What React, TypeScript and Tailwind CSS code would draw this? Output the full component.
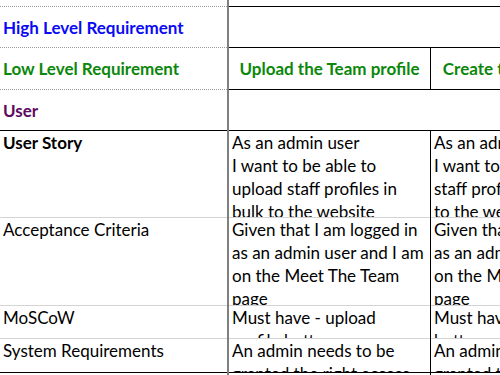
import React from 'react';

type Cell = { text?: string[]; cls?: string; center?: boolean };
type Row = {
    h: string;
    left: Cell;
    mid?: Cell; // if undefined, mid + right are merged
    right?: Cell;
    leftBorder: string;
    rightBorder: string;
    top?: boolean;
};

const dotted = 'border-b border-dotted border-[#9c9c9c]';
const solidBlack = 'border-b border-black';
const grey = 'border-b border-[#d4d4d4]';

const rows: Row[] = [
    { h: 'h-[7px]', left: {}, leftBorder: dotted, rightBorder: solidBlack },
    {
        h: 'h-[41px]',
        left: { text: ['High Level Requirement'], cls: 'font-bold text-[#0a0af5]' },
        leftBorder: dotted,
        rightBorder: solidBlack,
    },
    {
        h: 'h-[42px]',
        left: { text: ['Low Level Requirement'], cls: 'font-bold text-[#0b870b]' },
        mid: { text: ['Upload the Team profile'], cls: 'font-bold text-[#0b870b]', center: true },
        right: { text: ['Create the Team profile page'], cls: 'font-bold text-[#0b870b]', center: true },
        leftBorder: dotted,
        rightBorder: solidBlack,
    },
    {
        h: 'h-[41px]',
        left: { text: ['User'], cls: 'font-bold text-[#5e0a5e]' },
        leftBorder: solidBlack,
        rightBorder: solidBlack,
    },
    {
        h: 'h-[87px]',
        top: true,
        left: { text: ['User Story'], cls: 'font-bold' },
        mid: { text: ['As an admin user', 'I want to be able to', 'upload staff profiles in', 'bulk to the website'] },
        right: { text: ['As an admin user', 'I want to be able to upload', 'staff profiles in bulk', 'to the website'] },
        leftBorder: grey,
        rightBorder: grey,
    },
    {
        h: 'h-[88px]',
        top: true,
        left: { text: ['Acceptance Criteria'] },
        mid: { text: ['Given that I am logged in', 'as an admin user and I am', 'on the Meet The Team', 'page'] },
        right: { text: ['Given that I am logged in', 'as an admin user and I am', 'on the Meet The Team', 'page'] },
        leftBorder: grey,
        rightBorder: grey,
    },
    {
        h: 'h-[33px]',
        top: true,
        left: { text: ['MoSCoW'] },
        mid: { text: ['Must have - upload', 'profile button'] },
        right: { text: ['Must have - create', 'button'] },
        leftBorder: grey,
        rightBorder: grey,
    },
    {
        h: 'h-[34px]',
        top: true,
        left: { text: ['System Requirements'] },
        mid: { text: ['An admin needs to be', 'granted the right access'] },
        right: { text: ['An admin needs to be', 'granted the right access'] },
        leftBorder: solidBlack,
        rightBorder: solidBlack,
    },
];

const CellBody = ({ cell, top }: { cell: Cell; top?: boolean }) => (
    <div className={`h-full flex flex-col ${top ? 'justify-start' : 'justify-center'} ${cell.center ? 'items-center' : 'items-start'} px-[3px] ${cell.cls ?? ''}`}>
        {cell.text?.map((t, i) => (
            <div key={i} className="whitespace-nowrap leading-[23px]">{t}</div>
        ))}
    </div>
);

export default function App() {
    return (
        <div className="w-[500px] h-[375px] overflow-hidden bg-white text-black text-[17px]" style={{ fontFamily: 'Lato, "Liberation Sans", sans-serif' }}>
            {rows.map((r, i) => (
                <div key={i} className={`flex ${r.h}`}>
                    {/* label column, grey divider on its right */}
                    <div className="w-[229px] shrink-0 border-r-2 border-[#7f7f7f]">
                        <div className={`h-full overflow-hidden ${r.leftBorder}`}>
                            <CellBody cell={r.left} top={r.top} />
                        </div>
                    </div>
                    {r.mid ? (
                        <>
                            <div className="w-[202px] shrink-0 border-r border-black">
                                <div className={`h-full overflow-hidden ${r.rightBorder}`}>
                                    <CellBody cell={r.mid} top={r.top} />
                                </div>
                            </div>
                            <div className={`w-[240px] shrink-0 overflow-hidden ${r.rightBorder}`}>
                                <CellBody cell={r.right!} top={r.top} />
                            </div>
                        </>
                    ) : (
                        <div className={`w-[442px] shrink-0 ${r.rightBorder}`} />
                    )}
                </div>
            ))}
            <div className="flex h-[20px]">
                <div className="w-[229px] shrink-0 border-r-2 border-[#7f7f7f]" />
                <div className="w-[202px] shrink-0 border-r border-black" />
            </div>
        </div>
    );
}
